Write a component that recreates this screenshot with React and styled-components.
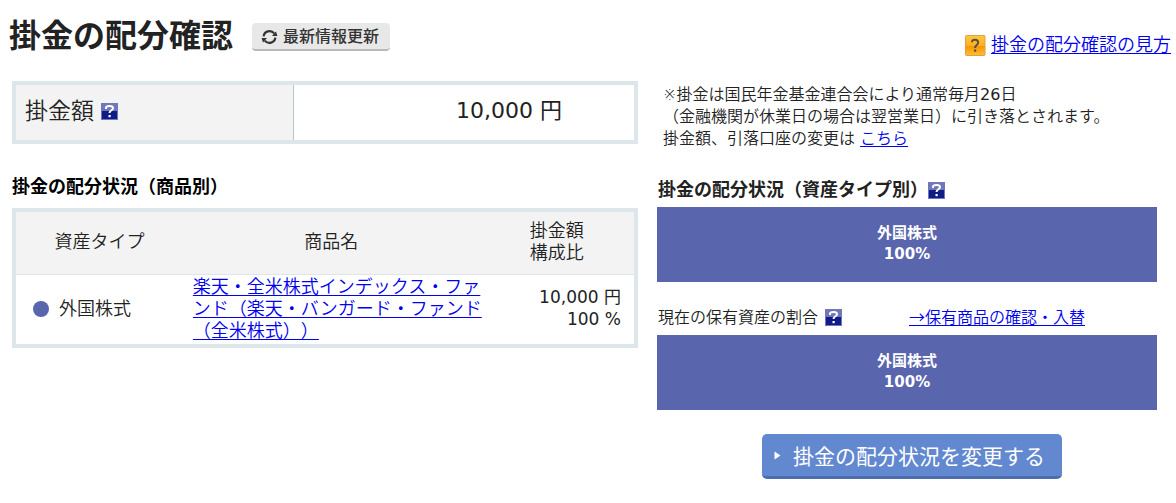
import React from "react";
import styled, { createGlobalStyle } from "styled-components";

const GlobalStyle = createGlobalStyle`
  * { box-sizing: border-box; }
  body {
    margin: 0;
    background: #fff;
    color: #222;
    font-family: "DejaVu Sans", "Noto Sans CJK JP", sans-serif;
    font-weight: 350;
    font-size: 18px;
    line-height: 22px;
    text-spacing-trim: space-all;
  }
`;

const Header = styled.header`
  display: flex;
  align-items: center;
  padding: 14px 5px 0 9px;
`;

const Title = styled.h1`
  margin: 0;
  font-size: 32px;
  line-height: 44px;
  font-weight: 700;
`;

const RefreshButton = styled.button`
  display: flex;
  align-items: center;
  gap: 5px;
  height: 28px;
  margin: 2px 0 0 19px;
  padding: 2px 11px 0 9px;
  border: 0;
  border-bottom: 2px solid #b9b9b9;
  border-radius: 4px;
  background: #e8e8e8;
  color: #333;
  font: 500 16px/24px "DejaVu Sans", "Noto Sans CJK JP", sans-serif;
  white-space: nowrap;
`;

const Guide = styled.div`
  display: flex;
  align-items: center;
  gap: 5px;
  margin: 18px 0 0 auto;
`;

const Link = styled.a`
  color: #0000ee;
  text-decoration: underline;
  text-decoration-thickness: 1px;
  text-underline-offset: 2px;
`;

const Columns = styled.main`
  display: grid;
  grid-template-columns: minmax(0, 626fr) minmax(0, 500fr);
  gap: 19px;
  padding: 23px 19px 24px 12px;
`;

const Amount = styled.dl`
  display: grid;
  grid-template-columns: 45% 1fr;
  margin: 0;
  border: 4px solid #dde6eb;
  font-size: 23px;
  line-height: 32px;
`;

const AmountLabel = styled.dt`
  display: flex;
  align-items: center;
  gap: 7px;
  padding: 10px 9px 13px;
  border-right: 1px solid #b8c4d0;
  background: #f3f3f3;
`;

const AmountValue = styled.dd`
  margin: 0;
  padding: 10px 72px 13px 0;
  font-size: 22px;
  font-weight: 400;
  text-align: right;
`;

const Heading = styled.h2`
  display: flex;
  align-items: center;
  margin: 0;
  font-size: 18px;
  line-height: 22px;
  font-weight: 700;
  color: ${(p) => (p.$strong ? "#000" : "#222")};
  padding: ${(p) => p.$pad};
`;

const Table = styled.table`
  width: 100%;
  table-layout: fixed;
  border-collapse: separate;
  border-spacing: 0;
  border: 4px solid #dde6eb;
`;

const Th = styled.th`
  width: ${(p) => p.$width};
  height: 63px;
  padding: ${(p) => p.$pad};
  border-bottom: 1px solid #dde6eb;
  background: #f3f3f3;
  font-weight: 350;
`;

const Td = styled.td`
  height: 69px;
  padding: ${(p) => p.$pad};
`;

const AmountTd = styled(Td)`
  font-size: 17px;
  font-weight: 400;
  text-align: right;
`;

const AssetType = styled.span`
  display: flex;
  align-items: center;
  gap: 10px;
`;

const Dot = styled.span`
  width: 16px;
  height: 16px;
  border-radius: 50%;
  background: #5965ad;
`;

const Note = styled.p`
  margin: 0;
  padding: 3px 0 0 6px;
  font-size: 16px;
  white-space: nowrap;
`;

const Figure = styled.span`
  font-weight: 400;
`;

const Holdings = styled.div`
  display: flex;
  align-items: center;
  gap: 7px;
  padding: 23px 0 8px 1px;
  font-family: "Noto Sans CJK JP", sans-serif;
  font-size: 16px;

  svg { margin-top: 3px; }
  a { margin-left: 60px; }
`;

const Bar = styled.div`
  padding: 16px 0 17px;
  background: #5965ad;
  color: #fff;
  font-size: 15px;
  line-height: 21px;
  font-weight: 700;
  text-align: center;
`;

const Actions = styled.div`
  display: flex;
  justify-content: center;
  padding: 24px 0 0 10px;
`;

const ChangeButton = styled.button`
  display: flex;
  align-items: center;
  gap: 12px;
  width: 300px;
  height: 45px;
  padding: 0 12px;
  border: 0;
  border-bottom: 3px solid #4d6cae;
  border-radius: 5px;
  background: #6288d0;
  color: #fff;
  font: 400 21px/32px "Noto Sans CJK JP", sans-serif;
  white-space: nowrap;
`;

const HelpIcon = () => (
  <svg width="17" height="17" viewBox="0 0 17 17" role="img" aria-label="ヘルプ">
    <rect width="17" height="17" fill="#7078ba" />
    <rect x="1" y="8" width="15" height="8" fill="#101c86" />
    <path d="M5 6V4.7C5 3.4 6 3 8.5 3S12 3.5 12 5.2C12 7.4 8.5 7.2 8.5 10" fill="none" stroke="#fff" strokeWidth="2" />
    <rect x="7.5" y="12" width="2.2" height="2.2" fill="#fff" />
  </svg>
);

const GuideIcon = () => (
  <svg width="21" height="21" viewBox="0 0 21 21" aria-hidden="true">
    <defs>
      <linearGradient id="guide" x1="0" y1="0" x2="0" y2="1">
        <stop offset="0" stopColor="#ffc83c" />
        <stop offset="0.5" stopColor="#fdb021" />
        <stop offset="0.55" stopColor="#f99508" />
        <stop offset="1" stopColor="#ffc02c" />
      </linearGradient>
    </defs>
    <rect x="0.5" y="0.5" width="19.5" height="20" rx="1" fill="url(#guide)" stroke="#dca052" />
    <path d="M7 7.2C7 5.4 8.2 4.8 10 4.8S13.2 5.7 13.2 7.6C13.2 10 10 10 10 13" fill="none" stroke="#5a5140" strokeWidth="2" />
    <rect x="9" y="14.5" width="2.2" height="2.2" fill="#5a5140" />
  </svg>
);

const RefreshIcon = () => (
  <svg width="17" height="16" viewBox="0 0 17 16" aria-hidden="true">
    <path d="M2.6 7.4A6 6 0 0 1 13.2 4.4M14.4 8.6A6 6 0 0 1 3.8 11.6" fill="none" stroke="#333" strokeWidth="2.2" />
    <path d="M11 7H16.4L15 2.6ZM6 9H0.6L2 13.4Z" fill="#333" />
  </svg>
);

const Caret = () => (
  <svg width="7" height="9" viewBox="0 0 7 9" aria-hidden="true">
    <path d="M0.5 0.5L6.5 4.5L0.5 8.5Z" fill="#fff" />
  </svg>
);

const AssetBar = ({ name, ratio }) => (
  <Bar>
    {name}
    <br />
    {ratio}
  </Bar>
);

export default function App() {
  return (
    <div lang="ja">
      <GlobalStyle />
      <Header>
        <Title>掛金の配分確認</Title>
        <RefreshButton type="button">
          <RefreshIcon />
          最新情報更新
        </RefreshButton>
        <Guide>
          <GuideIcon />
          <Link href="#guide">掛金の配分確認の見方</Link>
        </Guide>
      </Header>
      <Columns>
        <section>
          <Amount>
            <AmountLabel>
              掛金額
              <HelpIcon />
            </AmountLabel>
            <AmountValue>10,000 円</AmountValue>
          </Amount>
          <Heading $strong $pad="32px 0 10px">掛金の配分状況（商品別）</Heading>
          <Table>
            <thead>
              <tr>
                <Th $width="27%" $pad="0 0 2px">資産タイプ</Th>
                <Th $width="49%" $pad="0 6px 2px 0">商品名</Th>
                <Th $width="24%" $pad="0 6px 2px 0">掛金額<br />構成比</Th>
              </tr>
            </thead>
            <tbody>
              <tr>
                <Td $pad="0 0 2px 17px">
                  <AssetType>
                    <Dot />
                    外国株式
                  </AssetType>
                </Td>
                <Td $pad="0 0 2px 10px">
                  <Link href="#fund">楽天・全米株式インデックス・ファンド<wbr />（楽天・バンガード・ファンド<wbr />（全米株式））</Link>
                </Td>
                <AmountTd $pad="0 13px 4px 0">
                  10,000 円
                  <br />
                  100 %
                </AmountTd>
              </tr>
            </tbody>
          </Table>
        </section>
        <section>
          <Note>
            ※掛金は国民年金基金連合会により通常毎月<Figure>26</Figure>日
            <br />
            （金融機関が休業日の場合は翌営業日）に引き落とされます。
            <br />
            掛金額、引落口座の変更は <Link href="#change">こちら</Link>
          </Note>
          <Heading $pad="29px 0 6px 1px">
            掛金の配分状況（資産タイプ別）
            <HelpIcon />
          </Heading>
          <AssetBar name="外国株式" ratio="100%" />
          <Holdings>
            現在の保有資産の割合
            <HelpIcon />
            <Link href="#holdings">→保有商品の確認・入替</Link>
          </Holdings>
          <AssetBar name="外国株式" ratio="100%" />
          <Actions>
            <ChangeButton type="button">
              <Caret />
              掛金の配分状況を変更する
            </ChangeButton>
          </Actions>
        </section>
      </Columns>
    </div>
  );
}
